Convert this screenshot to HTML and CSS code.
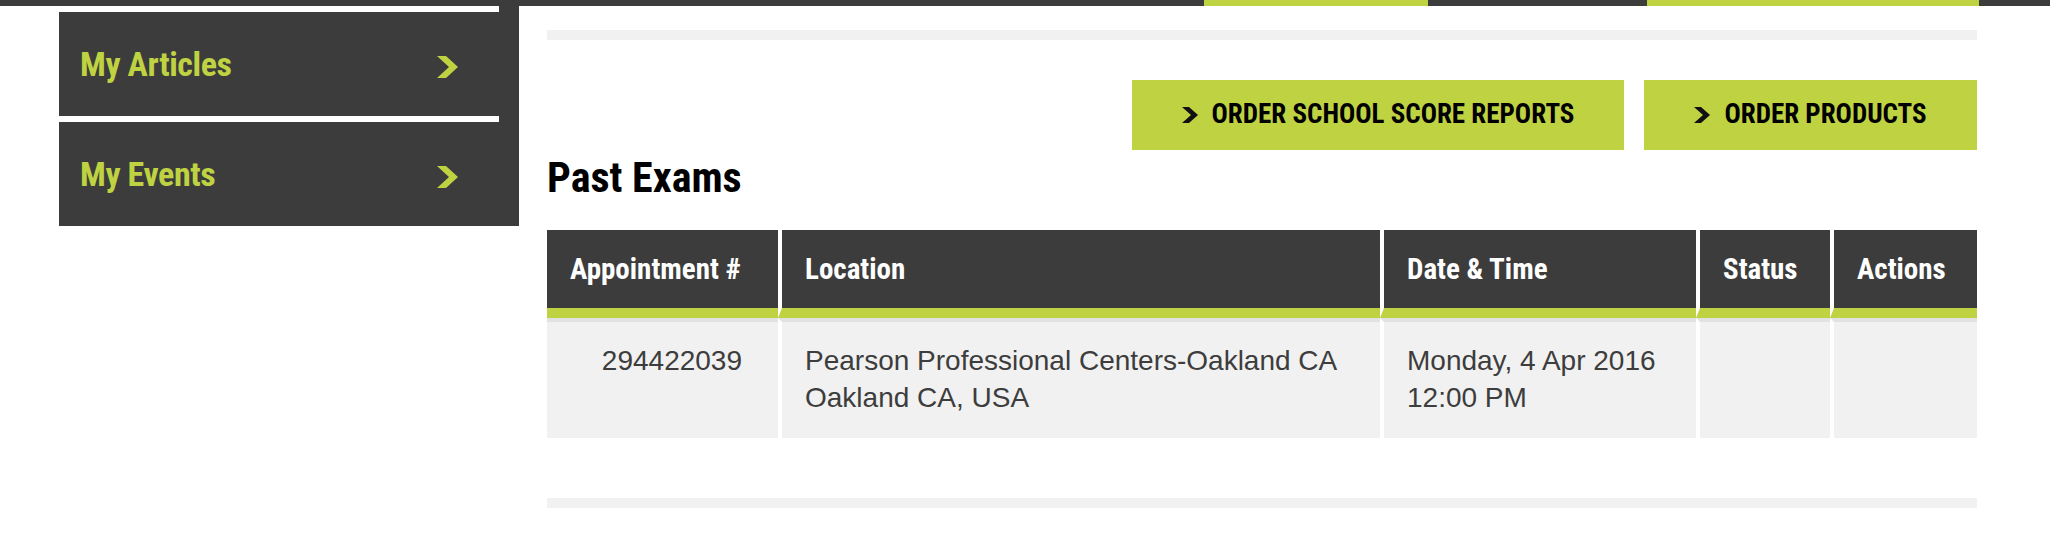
FILE: index.html
```html
<!DOCTYPE html>
<html lang="en">
<head>
<meta charset="utf-8">
<title>Past Exams</title>
<link rel="stylesheet" href="styles.css">
</head>
<body>
<div class="topbar">
  <span class="seg seg-dark seg-a"></span>
  <span class="seg seg-lime seg-b"></span>
  <span class="seg seg-dark seg-c"></span>
  <span class="seg seg-lime seg-d"></span>
  <span class="seg seg-dark seg-e"></span>
</div>
<div class="layout">
  <nav class="sidebar">
    <a class="side-item side-item-first" href="#">
      <span class="side-inner">
        <span class="side-label">My Articles</span>
        <svg class="side-chev" width="21" height="22" viewBox="0 0 21 22"><polygon points="0,0 9,0 21,11 9,22 0,22 12,11"/></svg>
      </span>
    </a>
    <a class="side-item" href="#">
      <span class="side-inner">
        <span class="side-label">My Events</span>
        <svg class="side-chev" width="21" height="22" viewBox="0 0 21 22"><polygon points="0,0 9,0 21,11 9,22 0,22 12,11"/></svg>
      </span>
    </a>
  </nav>
  <main class="content">
    <div class="rule"></div>
    <div class="actions">
      <a class="btn btn-wide" href="#">
        <svg class="btn-chev" width="16" height="16" viewBox="0 0 16 16"><polygon points="0,0 7,0 16,8 7,16 0,16 9,8"/></svg>
        <span>Order School Score Reports</span>
      </a>
      <a class="btn btn-narrow" href="#">
        <svg class="btn-chev" width="16" height="16" viewBox="0 0 16 16"><polygon points="0,0 7,0 16,8 7,16 0,16 9,8"/></svg>
        <span>Order Products</span>
      </a>
    </div>
    <h2 class="title">Past Exams</h2>
    <table class="exams">
      <thead>
        <tr>
          <th class="c-appt">Appointment #</th>
          <th class="c-loc">Location</th>
          <th class="c-date">Date &amp; Time</th>
          <th class="c-status">Status</th>
          <th class="c-act">Actions</th>
        </tr>
      </thead>
      <tbody>
        <tr>
          <td class="num">294422039</td>
          <td>Pearson Professional Centers-Oakland CA<br>Oakland CA, USA</td>
          <td>Monday, 4 Apr 2016<br>12:00 PM</td>
          <td></td>
          <td></td>
        </tr>
      </tbody>
    </table>
    <div class="rule rule-bottom"></div>
  </main>
</div>
</body>
</html>
```
FILE: styles.css
```css
html, body {
  margin: 0;
  padding: 0;
  background: #ffffff;
}

body {
  font-family: "Liberation Sans", Arial, sans-serif;
  color: #3d3d3d;
}

/* top strip */
.topbar {
  display: flex;
  height: 6px;
}
.seg { display: block; height: 6px; }
.seg-dark { background: #3c3c3c; }
.seg-lime { background: #bfd242; }
.seg-a { width: 1204px; }
.seg-b { width: 224px; }
.seg-c { width: 219px; }
.seg-d { width: 332px; }
.seg-e { flex: 1; }

.layout {
  display: flex;
  align-items: flex-start;
  padding-left: 59px;
  gap: 28px;
}

/* sidebar */
.sidebar {
  width: 460px;
  flex: none;
  display: flex;
  flex-direction: column;
  background: linear-gradient(to right, transparent 440px, #3c3c3c 440px);
}
.side-item {
  display: flex;
  align-items: center;
  height: 104px;
  background: #3c3c3c;
  padding-left: 21px;
  text-decoration: none;
  box-sizing: border-box;
}
.side-item-first {
  width: 440px;
  margin: 6px 0;
}
.side-inner {
  width: 378px;
  display: flex;
  align-items: center;
  justify-content: space-between;
}
.side-label {
  font-family: "Roboto Condensed", "Liberation Sans Narrow", sans-serif;
  font-weight: 700;
  font-size: 34px;
  letter-spacing: -0.4px;
  color: #bfd242;
  line-height: 40px;
}
.side-chev {
  display: block;
  fill: #bfd242;
  margin-top: 5px;
}

/* main content */
.content {
  width: 1430px;
  flex: none;
  padding-top: 24px;
}
.rule {
  height: 10px;
  background: #f1f1f1;
}
.rule-bottom {
  margin-top: 60px;
}

.actions {
  display: flex;
  justify-content: flex-end;
  gap: 20px;
  margin-top: 40px;
}
.btn {
  display: flex;
  align-items: center;
  justify-content: center;
  gap: 14px;
  height: 70px;
  background: #bfd242;
  color: #000;
  text-decoration: none;
  text-transform: uppercase;
  font-family: "Roboto Condensed", "Liberation Sans Narrow", sans-serif;
  font-weight: 700;
  font-size: 27px;
  box-sizing: border-box;
}
.btn-wide { width: 492px; }
.btn-narrow { width: 333px; }
.btn span { line-height: 30px; margin-top: -2px; }
.btn-chev { display: block; fill: #111; }

.title {
  margin: 4px 0 28px;
  font-family: "Roboto Condensed", "Liberation Sans Narrow", sans-serif;
  font-weight: 700;
  font-size: 42px;
  line-height: 48px;
  color: #000;
}

/* table */
.exams {
  width: 1430px;
  border-collapse: separate;
  border-spacing: 0;
  table-layout: fixed;
}
.exams th,
.exams td {
  text-align: left;
  padding-left: 23px;
  box-sizing: border-box;
}
.exams th + th,
.exams td + td {
  border-left: 4px solid #ffffff;
}
.exams th {
  height: 88px;
  padding-top: 0;
  padding-bottom: 0;
  background: #3c3c3c;
  border-bottom: 10px solid #bfd242;
  color: #ffffff;
  font-family: "Roboto Condensed", "Liberation Sans Narrow", sans-serif;
  font-weight: 700;
  font-size: 29px;
  line-height: 34px;
  vertical-align: middle;
  white-space: nowrap;
}
.exams .c-appt { width: 231px; }
.exams .c-loc { width: 602px; }
.exams .c-date { width: 316px; }
.exams .c-status { width: 134px; }
.exams .c-act { width: 147px; }

.exams td {
  background: #f1f1f1;
  border-top: 4px solid #e2e2e2;
  padding-top: 20px;
  padding-bottom: 22px;
  font-size: 28px;
  line-height: 37px;
  color: #3d3d3d;
  vertical-align: top;
}
.exams td.num {
  text-align: right;
  padding-left: 0;
  padding-right: 36px;
}
```
